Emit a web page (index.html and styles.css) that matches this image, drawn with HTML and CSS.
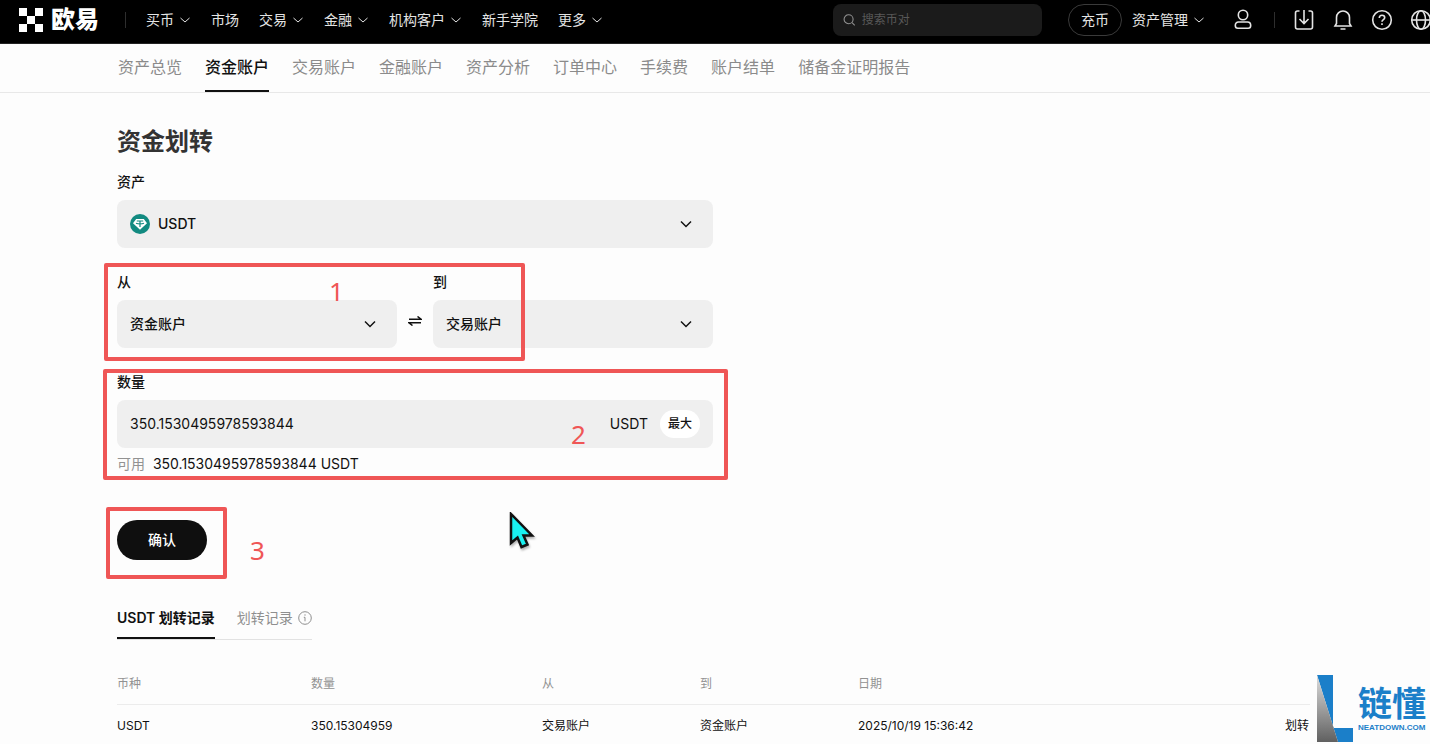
FILE: index.html
```html
<!DOCTYPE html>
<html lang="zh-CN">
<head>
    <meta charset="UTF-8">
    <meta name="viewport" content="width=device-width, initial-scale=1.0">
    <title>资金划转 - 欧易</title>
    <link rel="stylesheet" href="styles.css">
</head>
<body>
    <svg class="sprite" width="0" height="0" aria-hidden="true">
        <symbol id="chevron" viewBox="0 0 12 12">
            <path d="M1 3.5l5 5 5-5" fill="none" stroke="currentColor" stroke-width="1.5"/>
        </symbol>
        <symbol id="chevron-thin" viewBox="0 0 12 12">
            <path d="M1.500 4L6 8l4.500-4" fill="none" stroke="currentColor" stroke-width="1"/>
        </symbol>
    </svg>

    <header class="header">
        <a class="logo" href="#">
            <svg width="24" height="24" viewBox="0 0 24 24" fill="#fff" aria-hidden="true">
                <path d="M0 0h8v8H0zM16 0h8v8h-8zM8 8h8v8H8zM0 16h8v8H0zM16 16h8v8h-8z"/>
            </svg>
            <span>欧易</span>
        </a>
        <span class="divider"></span>
        <nav class="nav">
            <a href="#">买币<svg class="caret"><use href="#chevron-thin"/></svg></a>
            <a href="#">市场</a>
            <a href="#">交易<svg class="caret"><use href="#chevron-thin"/></svg></a>
            <a href="#">金融<svg class="caret"><use href="#chevron-thin"/></svg></a>
            <a href="#">机构客户<svg class="caret"><use href="#chevron-thin"/></svg></a>
            <a href="#">新手学院</a>
            <a href="#">更多<svg class="caret"><use href="#chevron-thin"/></svg></a>
        </nav>
        <label class="search">
            <svg width="14" height="14" viewBox="0 0 14 14" fill="none" stroke="#929292" stroke-width="1.2" aria-hidden="true">
                <circle cx="6.2" cy="6.2" r="5"/>
                <path d="M10 10l3 3"/>
            </svg>
            <input type="search" placeholder="搜索币对" aria-label="搜索币对">
        </label>
        <a class="deposit" href="#">充币</a>
        <a class="assets" href="#">资产管理<svg class="caret"><use href="#chevron-thin"/></svg></a>
        <div class="tools">
            <button type="button" aria-label="用户">
                <svg viewBox="0 0 22 22"><circle cx="11" cy="6" r="4.7"/><path d="M6.5 13h9c2 0 3.200 1.500 3.200 3.500 0 1.700-1 2.700-2.500 2.700H5.800c-1.500 0-2.500-1-2.500-2.700C3.300 14.500 4.500 13 6.500 13z"/></svg>
            </button>
            <span class="divider"></span>
            <button type="button" aria-label="下载">
                <svg viewBox="0 0 22 22"><path d="M6.500 2H4.500Q2.500 2 2.500 4v14q0 2 2 2h13q2 0 2-2V4q0-2-2-2h-2M11 1v13M6.500 10l4.500 4.500 4.500-4.500"/></svg>
            </button>
            <button type="button" aria-label="通知">
                <svg viewBox="0 0 22 22"><path d="M3 17l1.500-2.500V8.500a6.500 6.500 0 0 1 13 0v6L19 17zM8.500 20h5"/></svg>
            </button>
            <button type="button" aria-label="帮助">
                <svg viewBox="0 0 22 22"><circle cx="11" cy="11" r="9.300"/><path d="M8.300 9c0-1.700 1-2.700 2.700-2.700s2.700 1 2.700 2.500c0 1.800-2.700 1.900-2.700 4M11 14.300v1.700"/></svg>
            </button>
            <button type="button" aria-label="语言">
                <svg viewBox="0 0 22 22"><circle cx="11" cy="11" r="9.300"/><ellipse cx="11" cy="11" rx="4.500" ry="9.300"/><path d="M1.700 11h18.600"/></svg>
            </button>
        </div>
    </header>

    <nav class="subnav">
        <a href="#">资产总览</a>
        <a href="#" class="active">资金账户</a>
        <a href="#">交易账户</a>
        <a href="#">金融账户</a>
        <a href="#">资产分析</a>
        <a href="#">订单中心</a>
        <a href="#">手续费</a>
        <a href="#">账户结单</a>
        <a href="#">储备金证明报告</a>
    </nav>

    <main class="main">
        <h1>资金划转</h1>
        <form class="transfer">
            <div class="group">
                <label for="asset">资产</label>
                <div class="field">
                    <svg class="coin" viewBox="0 0 20 20" aria-hidden="true">
                        <circle cx="10" cy="10" r="10" fill="#128a80"/>
                        <path d="M6.200 5h7.600L17 9.200 10 15.800 3 9.200z" fill="#fff"/>
                        <path d="M6.800 7h6.400M10 7v6M6 9.200q4 1.500 8 0" fill="none" stroke="#128a80" stroke-width="1.200"/>
                    </svg>
                    <select id="asset"><option>USDT</option></select>
                    <svg class="arrow"><use href="#chevron"/></svg>
                </div>
            </div>

            <div class="pair">
                <div class="group">
                    <label for="from">从</label>
                    <div class="field">
                        <select id="from"><option>资金账户</option></select>
                        <svg class="arrow"><use href="#chevron"/></svg>
                    </div>
                </div>
                <button type="button" class="swap" aria-label="互换">
                    <svg width="14" height="10" viewBox="0 0 14 10" fill="none" stroke="#111" stroke-width="1.500">
                        <path d="M1 3.200h12L9.500.500M13 6.800H1l3.500 2.700"/>
                    </svg>
                </button>
                <div class="group">
                    <label for="to">到</label>
                    <div class="field">
                        <select id="to"><option>交易账户</option></select>
                        <svg class="arrow"><use href="#chevron"/></svg>
                    </div>
                </div>
                <div class="mark mark-accounts"></div>
                <span class="step step-1">1</span>
            </div>

            <div class="group amount">
                <label for="amount">数量</label>
                <div class="field">
                    <input type="text" id="amount" value="350.1530495978593844">
                    <span class="unit">USDT</span>
                    <button type="button" class="max">最大</button>
                </div>
                <p class="available"><span>可用</span> 350.1530495978593844 USDT</p>
                <div class="mark mark-amount"></div>
                <span class="step step-2">2</span>
            </div>

            <div class="submit">
                <button type="button" class="confirm">确认</button>
                <div class="mark mark-confirm"></div>
                <span class="step step-3">3</span>
                <svg class="cursor" width="26" height="38" viewBox="0 0 26 38" aria-hidden="true">
                    <path d="M2 2v29l6.500-5.500 4 9.500 6-2.500-4-9H23z" fill="#19f0f0" stroke="#111" stroke-width="2.500"/>
                </svg>
            </div>
        </form>

        <div class="tabs">
            <button type="button" class="active">USDT 划转记录</button>
            <button type="button">划转记录
                <svg width="14" height="14" viewBox="0 0 14 14" fill="none" stroke="#8f8f8f" aria-hidden="true">
                    <circle cx="7" cy="7" r="6.300"/>
                    <path d="M7 3.300v1.400M5.800 6.300H7v4"/>
                </svg>
            </button>
        </div>

        <table class="records">
            <thead>
                <tr>
                    <th class="col-coin">币种</th>
                    <th class="col-amount">数量</th>
                    <th class="col-from">从</th>
                    <th class="col-to">到</th>
                    <th class="col-date">日期</th>
                    <th class="col-type"></th>
                </tr>
            </thead>
            <tbody>
                <tr>
                    <td>USDT</td>
                    <td>350.15304959</td>
                    <td>交易账户</td>
                    <td>资金账户</td>
                    <td>2025/10/19 15:36:42</td>
                    <td>划转</td>
                </tr>
            </tbody>
        </table>
    </main>

    <div class="watermark">
        <svg width="36" height="67" viewBox="0 0 36 67" aria-hidden="true">
            <defs>
                <linearGradient id="steel" x1="0" y1="0" x2="0" y2="1">
                    <stop offset="0" stop-color="#ddd"/>
                    <stop offset="1" stop-color="#606060"/>
                </linearGradient>
            </defs>
            <path d="M0 0h16v53h20v14H21z" fill="#1b7fc9"/>
            <path d="M0 0l21 67H0z" fill="url(#steel)"/>
        </svg>
        <div class="watermark-text">
            <strong>链懂</strong>
            <small>NEATDOWN.COM</small>
        </div>
    </div>
</body>
</html>
```
FILE: styles.css
```css
* {
    box-sizing: border-box;
}

body {
    margin: 0;
    background: #fdfdfd;
    color: #111;
    font-family: Inter, "Noto Sans CJK SC", sans-serif;
    font-size: 14px;
    line-height: 20px;
}

a {
    color: inherit;
    text-decoration: none;
}

button, input, select {
    margin: 0;
    padding: 0;
    border: 0;
    background: none;
    color: inherit;
    font: inherit;
    outline: none;
}

button {
    cursor: pointer;
}

.sprite {
    position: absolute;
}

/* Top bar */
.header {
    display: flex;
    align-items: center;
    padding: 4px 0 7px 19px;
    background: #000;
    color: #e4e4e4;
    overflow: hidden;
    border-bottom: 1px solid #222;
    white-space: nowrap;
}

.logo {
    display: flex;
    align-items: center;
    gap: 8px;
    color: #fff;
    font-size: 24px;
    font-weight: 900;
}

.divider {
    width: 1px;
    height: 16px;
    background: #2e2e2e;
}

.logo + .divider {
    margin: 0 20px 0 26px;
}

.nav {
    display: flex;
    gap: 20px;
}

.nav a, .assets {
    display: flex;
    align-items: center;
    gap: 5px;
}

.caret {
    width: 12px;
    height: 12px;
}

.search {
    display: flex;
    align-items: center;
    gap: 6px;
    width: 209px;
    height: 32px;
    margin-left: auto;
    padding: 0 10px;
    border-radius: 8px;
    background: #1b1b1b;
}

.search input {
    width: 100%;
    font-size: 12px;
}

.search input::placeholder {
    color: #585858;
}

.deposit {
    margin: 0 10px 0 26px;
    padding: 5px 12px;
    border: 1px solid #3a3a3a;
    border-radius: 16px;
}

.tools {
    display: flex;
    align-items: center;
    gap: 17px;
    margin: 0 -2px 0 27px;
}

.tools button {
    width: 22px;
    height: 22px;
}

.tools .divider {
    margin: 0 1px 0 3px;
}

.tools svg {
    display: block;
    fill: none;
    stroke: #e4e4e4;
    stroke-width: 1.6;
}

/* Account menu */
.subnav {
    display: flex;
    gap: 23px;
    padding: 0 118px;
    border-bottom: 1px solid #e8e8e8;
    color: #8b8b8b;
    font-size: 16px;
    white-space: nowrap;
}

.subnav a {
    padding: 13px 0 13px;
    border-bottom: 2px solid transparent;
}

.subnav .active {
    border-color: #111;
    color: #111;
    font-weight: 500;
}

/* Transfer form */
.main {
    padding: 33px 117px 0;
}

h1 {
    margin: 0 0 14px;
    color: #333;
    font-size: 24px;
    font-weight: 700;
    line-height: 32px;
}

.transfer {
    display: flex;
    flex-direction: column;
    gap: 24px;
    max-width: 596px;
}

.group {
    flex: 1;
}

.group label {
    display: block;
    margin-bottom: 8px;
    font-weight: 500;
}

.field {
    display: flex;
    align-items: center;
    height: 48px;
    padding: 0 13px;
    border-radius: 8px;
    background: #efefef;
}

.field select, .field input {
    flex: 1;
    min-width: 0;
}

.field select {
    appearance: none;
    font-weight: 500;
}

.coin {
    width: 20px;
    height: 20px;
    margin-right: 8px;
}

.arrow {
    width: 12px;
    height: 12px;
    margin-right: 8px;
}

.pair, .amount, .submit {
    position: relative;
}

.pair {
    display: flex;
}

.swap {
    width: 36px;
    padding-top: 22px;
}

.max {
    margin-left: 12px;
    padding: 4px 8px;
    border-radius: 14px;
    background: #fff;
    font-size: 12px;
    font-weight: 500;
}

.available {
    margin: 6px 0 0;
}

.available span {
    margin-right: 4px;
    color: #929292;
}

.submit {
    margin-top: 22px;
}

.confirm {
    display: block;
    padding: 10px 31px;
    border-radius: 20px;
    background: #0f0f0f;
    color: #fff;
    font-weight: 500;
}

/* Tutorial marks drawn over the form */
.mark {
    position: absolute;
    border: 4px solid #ef5656;
    border-radius: 2px;
    pointer-events: none;
}

.mark-accounts {
    top: -9px;
    left: -13px;
    width: 421px;
    height: 98px;
}

.mark-amount {
    top: -3px;
    left: -14px;
    right: -15px;
    height: 111px;
}

.mark-confirm {
    top: -13px;
    left: -11px;
    width: 121px;
    height: 72px;
}

.step {
    position: absolute;
    color: #ef5656;
    font-family: "Noto Sans", sans-serif;
    font-size: 26px;
    line-height: 32px;
}

.step-1 {
    top: 3px;
    left: 212px;
}

.step-2 {
    top: 46px;
    left: 454px;
}

.step-3 {
    top: 14px;
    left: 133px;
}

.cursor {
    position: absolute;
    top: -8px;
    left: 392px;
    filter: drop-shadow(1px 2px 1px rgba(0, 0, 0, 0.3));
}

/* History */
.tabs {
    display: flex;
    gap: 22px;
    width: fit-content;
    margin: 48px 0 24px;
    border-bottom: 1px solid #e2e2e2;
}

.tabs button {
    display: flex;
    align-items: center;
    gap: 5px;
    padding-bottom: 9px;
    border-bottom: 2px solid transparent;
    color: #8f8f8f;
}

.tabs .active {
    border-color: #111;
    color: #111;
    font-weight: 600;
}

.records {
    width: 100%;
    border-collapse: collapse;
    table-layout: fixed;
    font-size: 12px;
    text-align: left;
}

.records th {
    height: 40px;
    padding: 0;
    border-bottom: 1px solid #ececec;
    color: #929292;
    font-weight: 400;
}

.records td {
    height: 38px;
    padding: 5px 0 0;
}

.records th:last-child, .records td:last-child {
    padding-right: 4px;
    text-align: right;
}

.col-coin {
    width: 194px;
}

.col-amount {
    width: 231px;
}

.col-from, .col-to {
    width: 158px;
}

.watermark {
    position: fixed;
    right: 0;
    bottom: 0;
    display: flex;
    gap: 5px;
    width: 120px;
    padding: 0 0 2px 7px;
    background: #fdfdfd;
    color: #1b7fc9;
}

.watermark-text {
    display: flex;
    flex-direction: column;
    justify-content: flex-end;
    padding-bottom: 9px;
}

.watermark strong {
    font-size: 34px;
    font-weight: 700;
    line-height: 38px;
}

.watermark small {
    font-family: "Liberation Sans", sans-serif;
    font-size: 8px;
    font-weight: 700;
    line-height: 10px;
}
```
